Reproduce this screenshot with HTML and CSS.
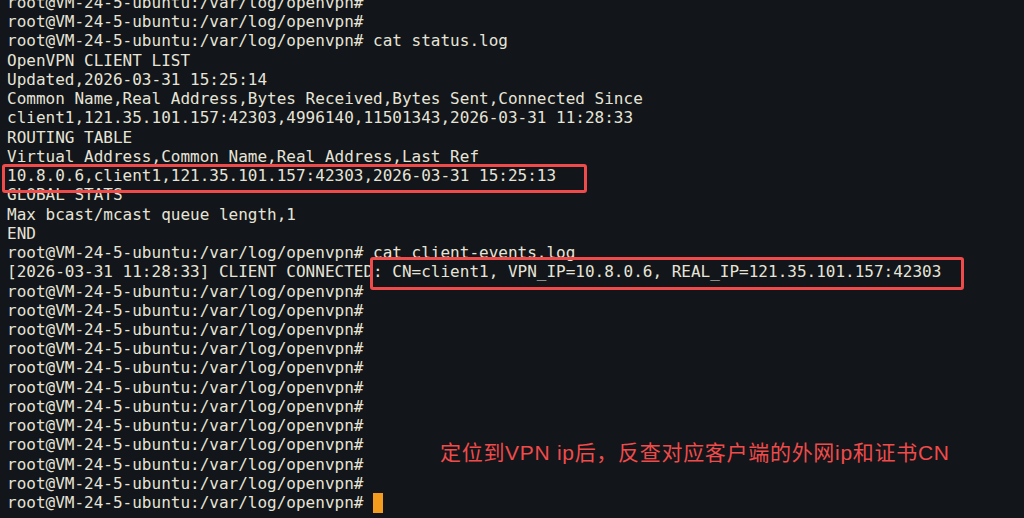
FILE: index.html
```html
<!DOCTYPE html>
<html>
<head>
<meta charset="utf-8">
<link rel="stylesheet" href="styles.css">
</head>
<body>
<div class="term">
<pre class="out">root@VM-24-5-ubuntu:/var/log/openvpn#
root@VM-24-5-ubuntu:/var/log/openvpn#
root@VM-24-5-ubuntu:/var/log/openvpn# cat status.log
OpenVPN CLIENT LIST
Updated,2026-03-31 15:25:14
Common Name,Real Address,Bytes Received,Bytes Sent,Connected Since
client1,121.35.101.157:42303,4996140,11501343,2026-03-31 11:28:33
ROUTING TABLE
Virtual Address,Common Name,Real Address,Last Ref
10.8.0.6,client1,121.35.101.157:42303,2026-03-31 15:25:13
GLOBAL STATS
Max bcast/mcast queue length,1
END
root@VM-24-5-ubuntu:/var/log/openvpn# cat client-events.log
[2026-03-31 11:28:33] CLIENT CONNECTED: CN=client1, VPN_IP=10.8.0.6, REAL_IP=121.35.101.157:42303
root@VM-24-5-ubuntu:/var/log/openvpn#
root@VM-24-5-ubuntu:/var/log/openvpn#
root@VM-24-5-ubuntu:/var/log/openvpn#
root@VM-24-5-ubuntu:/var/log/openvpn#
root@VM-24-5-ubuntu:/var/log/openvpn#
root@VM-24-5-ubuntu:/var/log/openvpn#
root@VM-24-5-ubuntu:/var/log/openvpn#
root@VM-24-5-ubuntu:/var/log/openvpn#
root@VM-24-5-ubuntu:/var/log/openvpn#
root@VM-24-5-ubuntu:/var/log/openvpn#
root@VM-24-5-ubuntu:/var/log/openvpn#
root@VM-24-5-ubuntu:/var/log/openvpn# <span class="cursor"></span></pre>
<div class="mark mark-route"></div>
<div class="mark mark-event"></div>
<div class="note">定位到VPN ip后，反查对应客户端的外网ip和证书CN</div>
</div>
</body>
</html>
```
FILE: styles.css
```css
html, body {
  margin: 0;
  padding: 0;
  background: #121519;
  overflow: hidden;
}
.term {
  position: relative;
  width: 1024px;
  height: 518px;
  overflow: hidden;
  background: #121519;
}
.out {
  margin: -7px 0 0 0;
  padding: 0 0 0 7px;
  font-family: "DejaVu Sans Mono", monospace;
  font-size: 16px;
  line-height: 19.23px;
  color: #e6e4d8;
  white-space: pre;
}
.cursor {
  display: inline-block;
  width: 10px;
  height: 20px;
  background: #f39c1e;
  vertical-align: -5px;
}
.mark {
  position: absolute;
  border: 3px solid #f04b4b;
  border-radius: 3px;
  box-sizing: border-box;
}
.mark-route {
  left: 2px;
  top: 164px;
  width: 585px;
  height: 29px;
}
.mark-event {
  left: 370px;
  top: 257px;
  width: 594px;
  height: 33px;
}
.note {
  position: absolute;
  left: 440px;
  top: 439px;
  font-family: "Liberation Sans", "Noto Sans CJK SC", sans-serif;
  font-size: 21px;
  letter-spacing: 0.7px;
  line-height: 28px;
  color: #f04b4b;
  white-space: nowrap;
}
```
